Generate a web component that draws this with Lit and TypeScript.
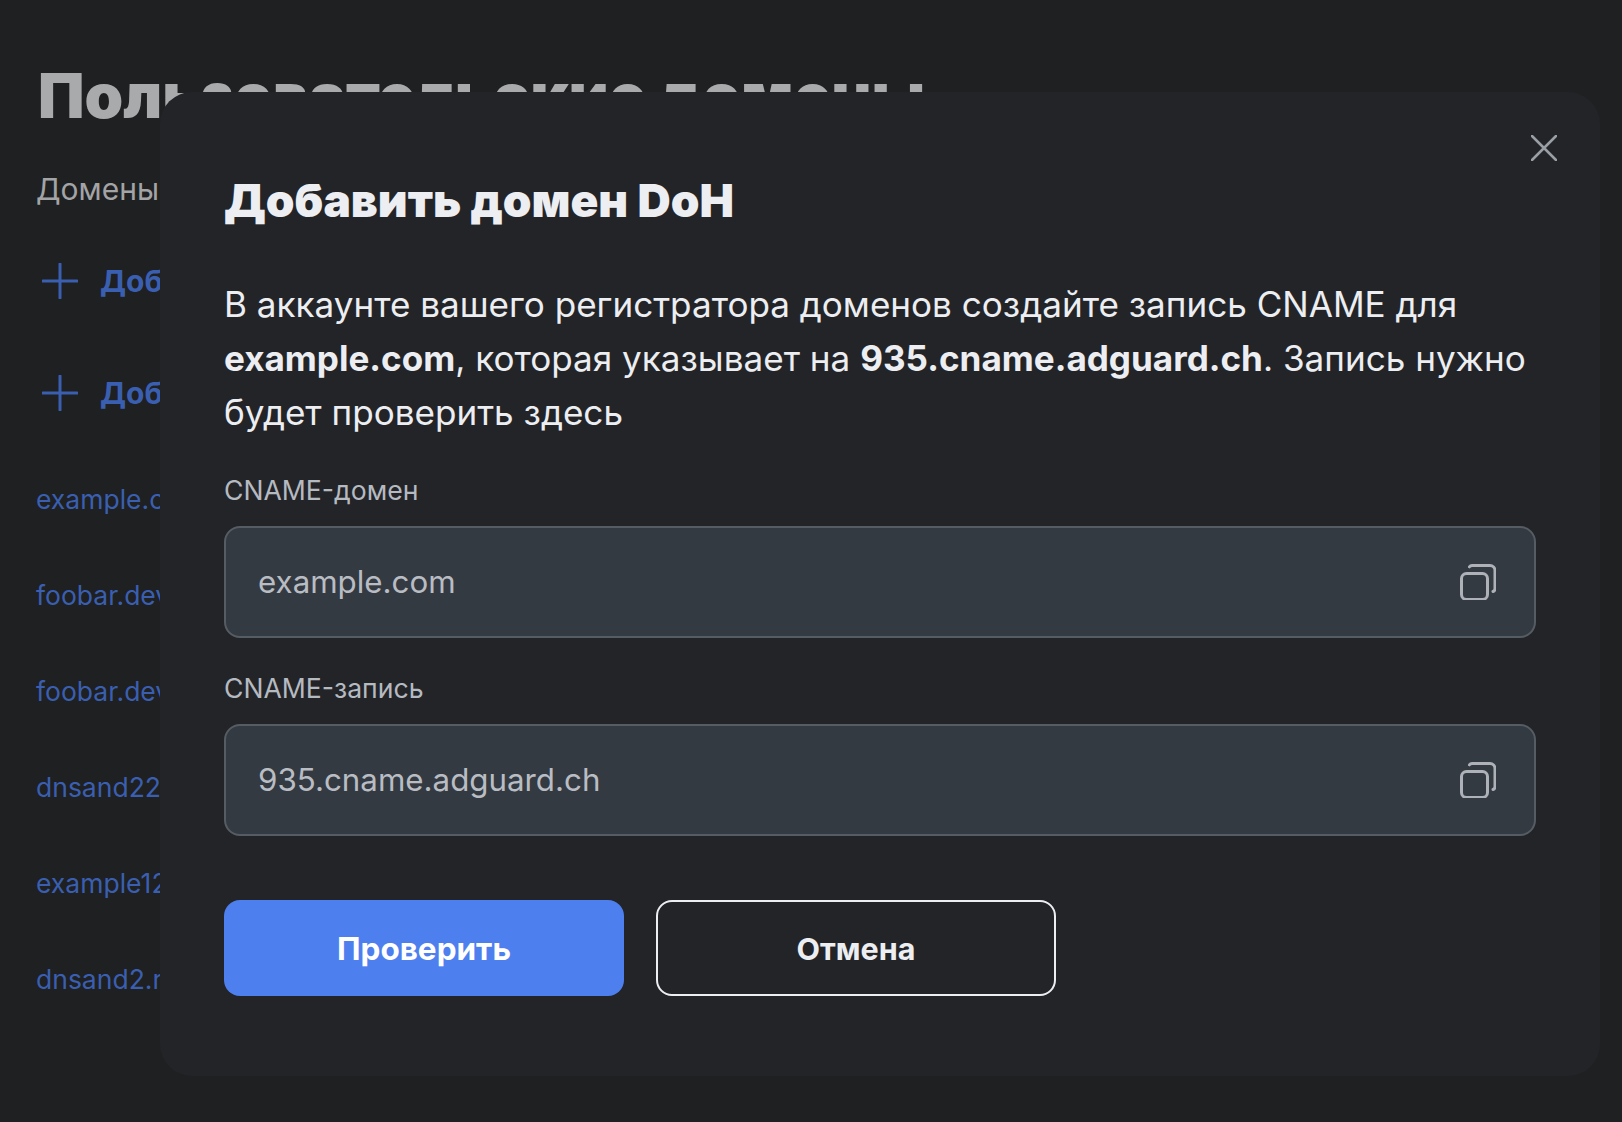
import { LitElement, html, css } from "lit";
import { customElement } from "lit/decorators.js";

const plus = html`<svg class="plus" viewBox="0 0 36 36" fill="none"><path d="M18 1v34M1 18h34" stroke="currentColor" stroke-width="3" stroke-linecap="round"/></svg>`;
const copy = html`<svg class="copy" viewBox="0 0 36 36" fill="none" stroke="currentColor" stroke-width="3" stroke-linecap="round" stroke-linejoin="round"><rect x="1.5" y="9.5" width="26" height="26" rx="5"/><path d="M9.500 2.800c.5-.8 1.500-1.300 2.500-1.300h18c2.800 0 5 2.200 5 5v18c0 1.500-.8 2.600-2 3"/></svg>`;

@customElement("app-root")
export class AppRoot extends LitElement {
  static styles = css`
    :host { display: block; width: 1622px; height: 1122px; position: relative; overflow: hidden; background: #1f2022; font-family: Inter, "Noto Sans", sans-serif; }
    .page { padding: 56px 0 0 36px; display: flex; flex-direction: column; }
    h1 { margin: 0 0 0 2px; font-size: 62px; line-height: 80px; font-weight: 900; color: #a9aaac; white-space: nowrap; }
    .sub { margin-top: 33px; font-size: 30px; line-height: 40px; color: #a3a4a6; }
    .add { display: flex; align-items: center; gap: 22px; margin-left: 6px; height: 112px; font-size: 30px; font-weight: 700; color: #3a5fb0; }
    .adds { margin-top: 16px; }
    .plus { width: 36px; height: 36px; flex: none; }
    .links { display: flex; flex-direction: column; gap: 56px; margin-top: 30px; font-size: 26.500px; line-height: 40px; color: #3a5fb0; }
    .modal { position: absolute; left: 160px; top: 92px; width: 1440px; height: 984px; box-sizing: border-box; padding: 78px 64px 0; background: #232428; border-radius: 32px; color: #eceef1; display: flex; flex-direction: column; }
    h2 { margin: 0; font-size: 46px; line-height: 60px; font-weight: 900; }
    p { margin: 47px 0 0; font-size: 35.100px; line-height: 54px; }
    p b { font-weight: 700; }
    label { display: block; font-size: 26.600px; line-height: 32px; color: #b5bac1; margin-bottom: 20px; }
    .f1 { margin-top: 35px; }
    .f2 { margin-top: 34px; }
    .input { height: 112px; box-sizing: border-box; border: 2px solid #565c63; border-radius: 16px; background: #343a42; display: flex; align-items: center; justify-content: space-between; padding: 0 38px 0 32px; font-size: 31.300px; color: #b9bdc3; }
    .copy { width: 36px; height: 36px; color: #aeb2b8; }
    .btns { display: flex; gap: 32px; margin-top: 64px; }
    .btn { width: 400px; height: 96px; box-sizing: border-box; border-radius: 16px; display: flex; align-items: center; justify-content: center; font-size: 31px; font-weight: 700; }
    .primary { background: #4d7fee; color: #fff; font-size: 31.500px; }
    .ghost { border: 2px solid #eceef1; color: #eceef1; font-size: 30.500px; }
    .x { position: absolute; right: 43px; top: 43px; width: 26px; height: 26px; color: #9a9fa6; }
  `;
  render() {
    return html`
      <div class="page">
        <h1>Пользовательские домены</h1>
        <div class="sub">Домены</div>
        <div class="adds">
          <div class="add">${plus}<span>Добавить</span></div>
          <div class="add">${plus}<span>Добавить</span></div>
        </div>
        <div class="links">
          <span>example.com</span><span>foobar.dev</span><span>foobar.dev</span><span>dnsand22.com</span><span>example12.com</span><span>dnsand2.ru</span>
        </div>
      </div>
      <div class="modal">
        <svg class="x" viewBox="0 0 26 26" fill="none"><path d="M1 1l24 24M25 1L1 25" stroke="currentColor" stroke-width="2.500" stroke-linecap="round"/></svg>
        <h2>Добавить домен DoH</h2>
        <p>В аккаунте вашего регистратора доменов создайте запись CNAME для <b>example.com</b>, которая указывает на <b>935.cname.adguard.ch</b>. Запись нужно будет проверить здесь</p>
        <div class="f1"><label>CNAME-домен</label><div class="input"><span>example.com</span>${copy}</div></div>
        <div class="f2"><label>CNAME-запись</label><div class="input"><span>935.cname.adguard.ch</span>${copy}</div></div>
        <div class="btns"><div class="btn primary">Проверить</div><div class="btn ghost">Отмена</div></div>
      </div>
    `;
  }
}
